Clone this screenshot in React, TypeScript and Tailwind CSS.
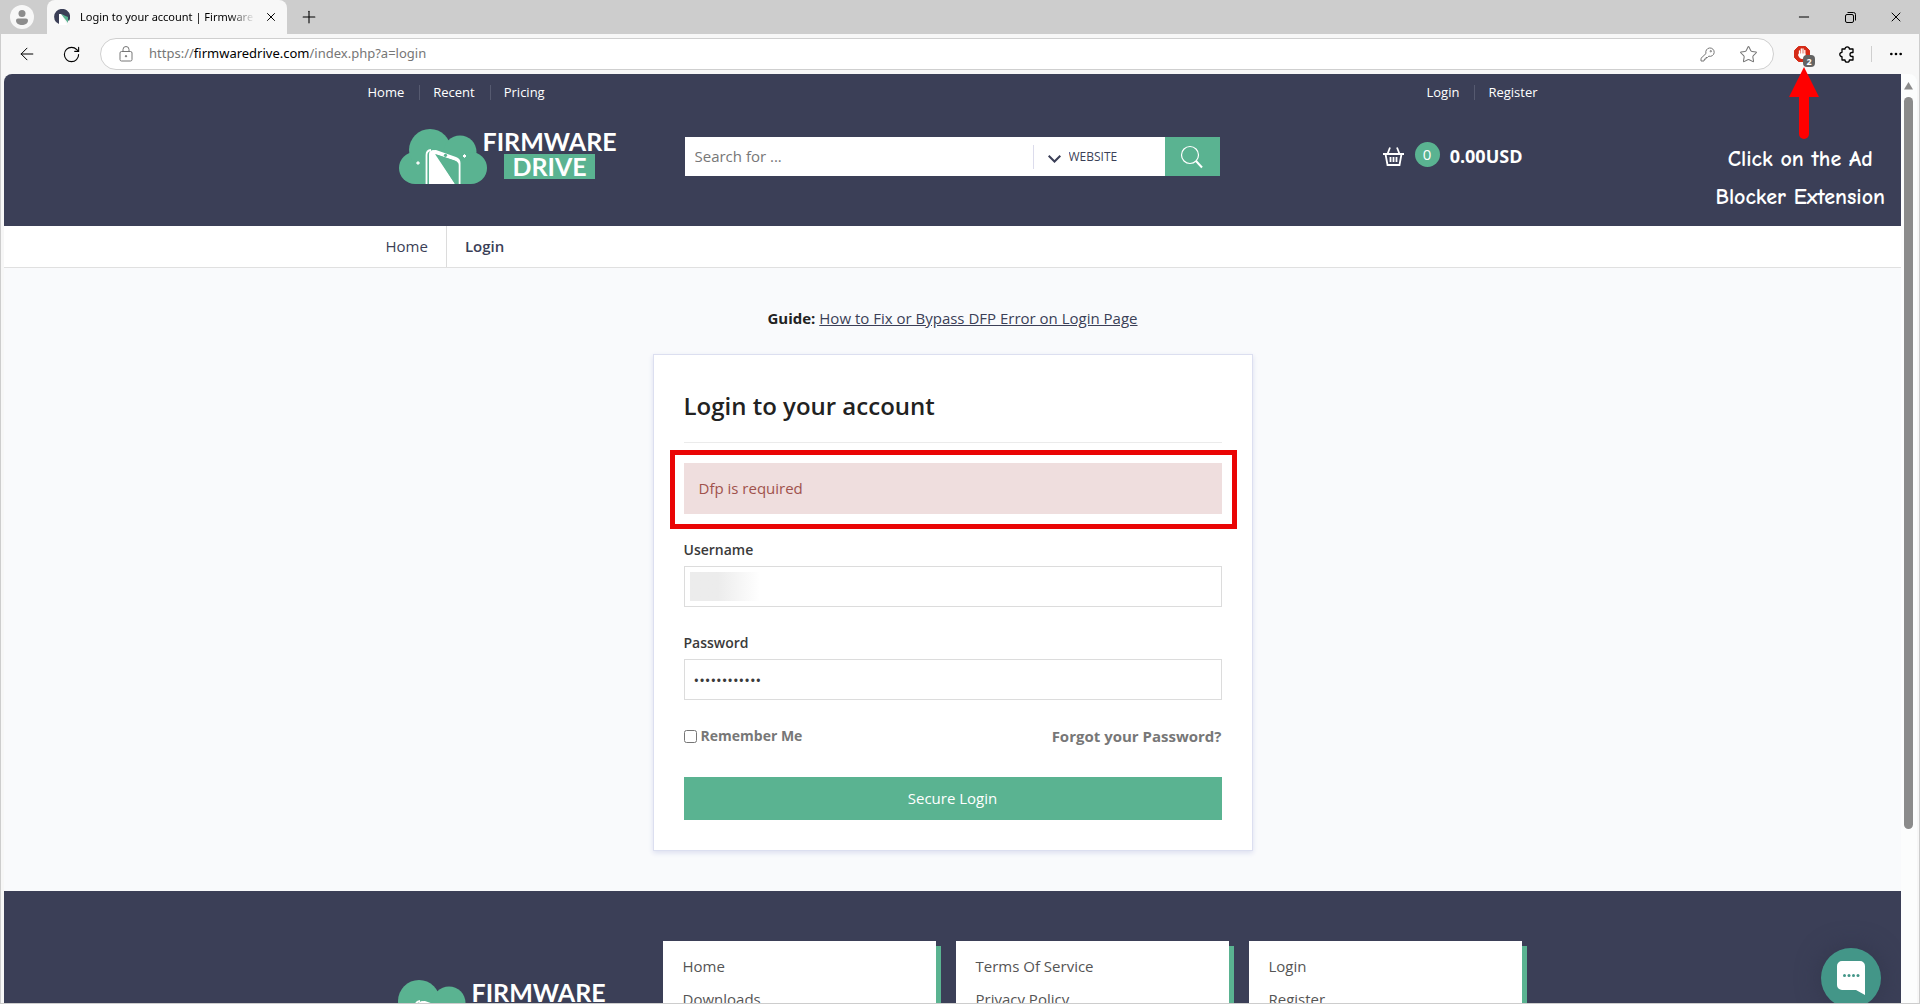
import { useState, type ReactNode } from "react";
import { ArrowLeft, Ellipsis, Minus, Plus, RotateCw, Star, X } from "lucide-react";

function Cloud() {
  return (
    <svg width="88" height="55" viewBox="0 0 88 55" aria-hidden="true" className="shrink-0">
      <g fill="#5ab391">
        <circle cx="16" cy="39" r="16" />
        <circle cx="31" cy="21" r="21" />
        <circle cx="61" cy="23" r="16.500" />
        <circle cx="72" cy="39" r="16" />
        <path d="M16 30h56v25H16z" />
      </g>
      <path d="M27.500 55V26q0-4.500 4.500-5" fill="none" stroke="#fff" strokeWidth="1.800" />
      <path d="M30 55V25q0-3.500 4.500-4L56 55z" fill="#fff" />
      <path d="M33 21.500q2-.800 4-.500l20 7q4.500 1.500 4.500 6V55h-1.800V36q0-3-4-4.500L36 25z" fill="#fff" />
      <path d="M36 25l20 30h3V36q0-3-4-4.500z" fill="#5ab391" />
      <circle cx="46.500" cy="26.300" r="1.600" fill="#5ab391" />
      <path d="M19 32.500l1.500 1.500-1.500 1.500-1.500-1.500zM65.500 25.500l1.500 1.500-1.500 1.500-1.500-1.500z" fill="#fff" stroke="#fff" />
    </svg>
  );
}

function Logo() {
  return (
    <a href="#home" aria-label="Firmware Drive" className="flex items-start font-['Lato'] font-bold text-white">
      <Cloud />
      <span className="-ml-1 flex flex-col items-center text-[25px] leading-[25px]">
        <span>FIRMWARE</span>
        <span className="bg-[#5ab391] px-2">DRIVE</span>
      </span>
    </a>
  );
}

function IconButton({ label, children, className = "" }: { label: string; children: ReactNode; className?: string }) {
  return (
    <button type="button" aria-label={label} className={`flex items-center justify-center ${className}`}>
      {children}
    </button>
  );
}

function TabStrip() {
  return (
    <div className="flex h-[34px] shrink-0 bg-[#cdcdcd] pl-[9px]">
      <IconButton label="Profile" className="mt-[5px] size-6 rounded-full bg-[#f7f7f7]">
        <svg width="12" height="15" viewBox="0 0 12 15" fill="#8c8c8c">
          <circle cx="6" cy="3.500" r="3.500" />
          <path d="M2 8.500h8a2 2 0 0 1 2 2c0 3-3 4.500-6 4.500s-6-1.500-6-4.500a2 2 0 0 1 2-2z" />
        </svg>
      </IconButton>
      <div className="ml-[13px] flex w-60 items-center rounded-t-lg bg-[#f7f7f7] pr-2 pl-[7px]">
        <svg width="16" height="16" viewBox="0 0 16 16" className="shrink-0">
          <path d="M2 13A8 8 0 1 1 15 12L9 6 5 5v10z" fill="#3b3f57" />
          <path d="M7 5l7 3v6z" fill="#5ab391" />
          <path d="M5 5h2l6 11H5z" fill="#fff" />
        </svg>
        <span className="ml-2.5 flex-1 overflow-hidden bg-linear-to-r from-black from-85% to-transparent bg-clip-text font-['Noto_Sans'] text-[11px] whitespace-nowrap text-transparent">
          Login to your account | Firmware
        </span>
        <IconButton label="Close tab" className="ml-2 size-4"><X size={14} strokeWidth={1.700} /></IconButton>
      </div>
      <IconButton label="New tab" className="ml-2.5 w-6"><Plus size={20} strokeWidth={1.300} /></IconButton>
      <div className="ml-auto flex">
        <IconButton label="Minimize" className="w-[46px]"><Minus size={16} strokeWidth={1.500} /></IconButton>
        <IconButton label="Restore" className="w-[46px]">
          <svg width="11" height="11" viewBox="0 0 11 11" fill="none" stroke="#000">
            <rect x=".500" y="2.500" width="8" height="8" rx="1.500" />
            <path d="M2.500 .500H8.500a2 2 0 0 1 2 2V8.500" />
          </svg>
        </IconButton>
        <IconButton label="Close" className="w-[46px]"><X size={16} strokeWidth={1.500} /></IconButton>
      </div>
    </div>
  );
}

function AddressBar() {
  return (
    <div className="flex h-10 shrink-0 items-center bg-[#f7f7f7] pr-[15px] pl-4">
      <IconButton label="Back" className="w-5"><ArrowLeft size={22} strokeWidth={1.200} /></IconButton>
      <IconButton label="Reload" className="ml-6 w-5"><RotateCw size={19} strokeWidth={1.400} /></IconButton>
      <div className="ml-[19px] flex h-8 flex-1 items-center rounded-full border border-[#cfcfcf] bg-white pr-[15px] pl-[18px] text-[#767676]">
        <svg width="14" height="16" viewBox="0 0 14 16" fill="none" stroke="currentColor" className="shrink-0">
          <rect x="1" y="5.500" width="12" height="9.500" rx="1.500" />
          <path d="M4 5.500V3.500a3 3 0 0 1 6 0v2" />
          <circle cx="7" cy="10.200" r=".700" fill="currentColor" />
        </svg>
        <span className="ml-4 flex-1 font-['Noto_Sans'] text-[13px]">
          https://<span className="text-black">firmwaredrive.com</span>/index.php?a=login
        </span>
        <IconButton label="Saved passwords">
          <svg width="15" height="15" viewBox="0 0 15 15" fill="none" stroke="currentColor">
            <path d="M6 6.500a4.200 4.200 0 1 1 2.800 2.700L7.500 10.500H6v1.500H4.500l-.500 2H1v-2.700z" strokeLinejoin="round" />
            <circle cx="10.800" cy="4.200" r=".700" />
          </svg>
        </IconButton>
        <IconButton label="Add to favorites" className="ml-6"><Star size={19} strokeWidth={1.300} /></IconButton>
      </div>
      <IconButton label="Ad blocker" className="relative ml-[19px] size-[18px]">
        <svg width="18" height="18" viewBox="0 0 18 18">
          <path d="M5.500 1.500h7l4 4v7l-4 4h-7l-4-4v-7z" fill="#d52b17" stroke="#d52b17" strokeLinejoin="round" />
          <path d="M6.500 6v4M8.300 4v6M10 4v6M11.800 5.500v5" stroke="#fff" strokeWidth="1.300" strokeLinecap="round" />
          <path d="M5.800 8.500h6.600v2.500q0 3-3.300 3-2.500 0-4.100-4z" fill="#fff" />
        </svg>
        <span className="absolute top-2.5 left-2.5 flex size-3 items-center justify-center rounded-sm bg-[#636363] font-['Noto_Sans'] text-[9px] leading-none font-bold text-white">2</span>
      </IconButton>
      <IconButton label="Extensions" className="ml-[26px] w-5">
        <svg width="16" height="18" viewBox="0 0 16 18" fill="none" stroke="#000" strokeWidth="1.300" strokeLinejoin="round">
          <path d="M3 4h3a2.200 2.200 0 1 1 4.400 0H14v3.500h-1a2 2 0 0 0 0 4h1V15h-3.600a2.200 2.200 0 1 1-4.400 0H3v-3.300a2.200 2.200 0 1 1 0-4.400z" />
        </svg>
      </IconButton>
      <span className="ml-[14px] h-4 w-px bg-[#cfcfcf]" />
      <IconButton label="Settings and more" className="ml-4 w-4"><Ellipsis size={18} /></IconButton>
    </div>
  );
}

function TopLinks({ links }: { links: string[] }) {
  return (
    <nav className="flex divide-x divide-[#565a70] text-[13px] leading-[15px] text-white">
      {links.map((link) => (
        <a key={link} href={`#${link}`} className="pr-[15px] pl-[13px] first:pl-0 last:pr-0">{link}</a>
      ))}
    </nav>
  );
}

function Header() {
  return (
    <header className="bg-[#3b3f57] pb-[42px]">
      <div className="mx-auto max-w-[1170px]">
        <div className="flex h-9 items-center justify-between">
          <TopLinks links={["Home", "Recent", "Pricing"]} />
          <TopLinks links={["Login", "Register"]} />
        </div>
        <div className="mt-[19px] flex h-[55px] items-center pr-[15px]">
          <div className="w-[317px] pl-[31px]"><Logo /></div>
          <form className="flex h-[39px] w-[535px] items-center bg-white">
            <input aria-label="Search" placeholder="Search for ..." className="min-w-0 flex-1 px-2.5 text-[15px] outline-none placeholder:text-[#777]" />
            <label className="flex h-6 w-[132px] items-center border-l border-[#dcdcec] pl-[14px] text-[12px] text-[#3b3f57]">
              <svg width="13" height="8" viewBox="0 0 13 8" fill="none" stroke="currentColor" strokeWidth="2" className="mt-1 shrink-0">
                <path d="M.700 .700l5.800 5.800 5.800-5.800" />
              </svg>
              <select aria-label="Search in" className="ml-2 flex-1 appearance-none bg-transparent outline-none">
                <option>WEBSITE</option>
              </select>
            </label>
            <IconButton label="Submit search" className="h-full w-[55px] bg-[#5ab391]">
              <svg width="24" height="24" viewBox="0 0 24 24" fill="none" stroke="#fff">
                <circle cx="10" cy="10" r="8.500" strokeWidth="1.200" />
                <path d="M16 16l6 6.500" strokeWidth="2" />
              </svg>
            </IconButton>
          </form>
          <a href="#cart" className="ml-auto flex items-center text-white">
            <svg width="21" height="19" viewBox="0 0 21 19" fill="none" stroke="#fff" strokeWidth="1.800">
              <path d="M0 7h21M2.500 7l2 11h12l2-11M4.500 7L7 .500M16.500 7L14 .500M7.500 10v5M10.500 10v5M13.500 10v5" />
            </svg>
            <span className="mr-2.5 mb-1 ml-[11px] flex size-[25px] items-center justify-center rounded-full bg-[#5ab391] text-[15px]">0</span>
            <span className="mb-0.5 text-[18px] leading-6 font-bold">0.00USD</span>
          </a>
        </div>
      </div>
    </header>
  );
}

function Field({ id, label, type, children }: { id: string; label: string; type: string; children?: ReactNode }) {
  const [value, setValue] = useState(type === "password" ? "abcdefghijkl" : "");
  return (
    <div className="relative mt-[26px]">
      <label htmlFor={id} className="block text-[14px] leading-5 font-semibold text-[#3a3a3a]">{label}</label>
      <input
        id={id}
        type={type}
        value={value}
        onChange={(event) => setValue(event.target.value)}
        className="mt-1.5 block h-[41px] w-full border border-[#dcdcdc] bg-white px-[9px] text-[15px] text-[#3a3a3a] outline-none"
      />
      {children}
    </div>
  );
}

function LoginCard() {
  return (
    <form className="mx-auto mt-6 max-w-[600px] border border-[#dcdff0] bg-white px-[30px] pt-[35px] pb-[30px] shadow-[0_2px_5px_#dcdff0]">
      <h1 className="border-b border-[#ebebeb] pb-5 text-[24px] leading-8 font-semibold text-[#222]">Login to your account</h1>
      <div role="alert" className="relative mt-5 bg-[#efdede] px-[15px] py-[15px] text-[15px] leading-[21px] text-[#a0524c]">
        Dfp is required
        <span className="absolute -top-[13px] -right-[15px] -bottom-[15px] -left-[14px] border-[5px] border-[#ea0505]" />
      </div>
      <Field id="username" label="Username" type="text">
        <span className="absolute bottom-[6px] left-[6px] h-[29px] w-[70px] bg-linear-to-r from-[#ececec] from-40% to-white" />
      </Field>
      <Field id="password" label="Password" type="password" />
      <div className="mt-[26px] flex justify-between text-[14px] leading-5 font-bold text-[#777]">
        <label className="flex items-center gap-1"><input type="checkbox" className="size-[13px]" />Remember Me</label>
        <a href="#forgot" className="text-[15px]">Forgot your Password?</a>
      </div>
      <button type="submit" className="mt-[31px] h-[43px] w-full bg-[#5ab391] text-[15px] text-white">Secure Login</button>
    </form>
  );
}

const footerColumns = [
  ["Home", "Downloads"],
  ["Terms Of Service", "Privacy Policy"],
  ["Login", "Register"],
];

function Footer() {
  return (
    <footer className="mt-10 bg-[#3b3f57] pt-[50px] pb-10">
      <div className="mx-auto flex max-w-[1170px] pr-4">
        <div className="w-[295px] shrink-0 pt-[39px] pl-5"><Logo /></div>
        <div className="grid flex-1 grid-cols-3 gap-5">
          {footerColumns.map((column) => (
            <ul key={column[0]} className="bg-white px-5 py-[9px] text-[15px] leading-[33px] text-[#555] shadow-[5px_5px_0_#5ab391]">
              {column.map((item) => (
                <li key={item}><a href={`#${item}`}>{item}</a></li>
              ))}
            </ul>
          ))}
        </div>
      </div>
    </footer>
  );
}

function Callout() {
  return (
    <div className="pointer-events-none absolute top-[67px] right-[34px] flex flex-col items-center text-center text-white">
      <svg width="30" height="73" viewBox="0 0 30 73" className="-mr-2">
        <path d="M15 24v43" stroke="#f00" strokeWidth="10" strokeLinecap="round" />
        <path d="M15 0l15 30H0z" fill="#f00" />
      </svg>
      <p className="font-['Ink_Free','Comic_Neue',cursive] text-[22px] leading-[38px] font-bold">Click on the Ad<br />Blocker Extension</p>
    </div>
  );
}

function ScrollBar() {
  return (
    <div className="flex w-4 flex-col items-center rounded-tr-lg bg-[#fcfdfd] pt-2 pr-px">
      <svg width="9" height="8" viewBox="0 0 9 8"><path d="M4.500 0L9 7.500H0z" fill="#8b8b8b" /></svg>
      <span className="mt-[7px] h-[79.5%] w-[9px] rounded-full bg-[#8b8b8b]" />
    </div>
  );
}

export default function App() {
  return (
    <div className="relative flex h-screen flex-col overflow-hidden border border-t-0 border-[#cdcdcd] bg-[#f7f7f7] font-['Open_Sans',sans-serif] text-black">
      <TabStrip />
      <AddressBar />
      <div className="flex min-h-0 flex-1 pr-0.5 pl-[3px]">
        <main className="relative flex-1 overflow-hidden rounded-tl-lg bg-[#f9fafc]">
          <Header />
          <nav aria-label="Breadcrumb" className="border-b border-[#e0e0e0] bg-white text-[15px] leading-[41px] text-[#3b3f57]">
            <div className="mx-auto flex max-w-[1170px] divide-x divide-[#dcdcdc]">
              <a href="#home" className="px-[18px]">Home</a>
              <span className="px-[18px] font-semibold">Login</span>
            </div>
          </nav>
          <p className="mt-[38px] text-center text-[15px] leading-6 text-[#222]">
            <b>Guide:</b> <a href="#guide" className="text-[#3b3f57] underline">How to Fix or Bypass DFP Error on Login Page</a>
          </p>
          <LoginCard />
          <Footer />
          <button type="button" aria-label="Open chat" className="absolute right-5 -bottom-[5px] flex size-[60px] items-center justify-center rounded-full bg-[#439688] shadow-[0_0_24px_#33374d]">
            <svg width="28" height="34" viewBox="0 0 28 34">
              <path d="M5 0h18a5 5 0 0 1 5 5v29l-9-5H5a5 5 0 0 1-5-5V5a5 5 0 0 1 5-5z" fill="#fff" />
              <g fill="#439688"><circle cx="7.500" cy="14.500" r="1.500" /><circle cx="12" cy="14.500" r="1.500" /><circle cx="16.500" cy="14.500" r="1.500" /><circle cx="21" cy="14.500" r="1.500" /></g>
            </svg>
          </button>
        </main>
        <ScrollBar />
      </div>
      <Callout />
    </div>
  );
}
